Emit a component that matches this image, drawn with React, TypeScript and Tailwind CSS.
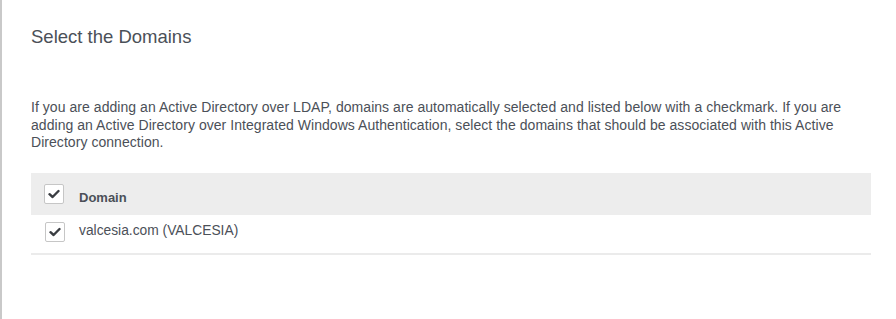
const Check = () => (
  <span className="flex h-5 w-5 shrink-0 items-center justify-center rounded-[2px] border border-[#c6c6c6] bg-white">
    <svg width="12" height="10" viewBox="0 0 12 10" fill="none">
      <path d="M1.5 5.2 L4.6 8 L10.5 2" stroke="#3a3d42" strokeWidth="2.4" strokeLinecap="round" strokeLinejoin="round" />
    </svg>
  </span>
);

export default function App() {
  return (
    <div className="h-[319px] w-[896px] bg-white font-['Liberation_Sans',Arial,sans-serif] text-[#4b5058]">
      <div className="h-full border-l-2 border-[#c9c9c9] pl-[29px] pr-[25px] pt-[25px]">
        <h2 className="text-[18.5px] leading-6">Select the Domains</h2>
        <p className="mt-[50px] whitespace-nowrap text-[14px] leading-[17.5px] tracking-[0.05px]">
          If you are adding an Active Directory over LDAP, domains are automatically selected and listed below with a checkmark. If you are
          <br />
          adding an Active Directory over Integrated Windows Authentication, select the domains that should be associated with this Active
          <br />
          Directory connection.
        </p>
        <div className="mt-[21px]">
          <div className="flex h-[42px] items-center gap-[15px] bg-[#ededed] pl-[13px]">
            <Check />
            <span className="mt-[8px] text-[13px] font-bold">Domain</span>
          </div>
          <div className="flex h-[40px] items-center gap-[14px] border-b-2 border-[#ebebeb] pb-[4px] pl-[14px]">
            <Check />
            <span className="text-[13.8px]">valcesia.com (VALCESIA)</span>
          </div>
        </div>
      </div>
    </div>
  );
}
